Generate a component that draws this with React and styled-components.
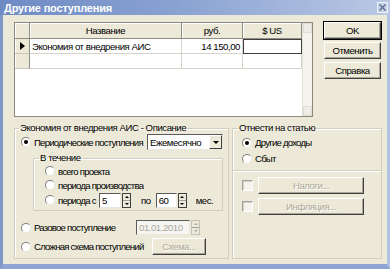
import React from 'react';
import styled, { createGlobalStyle } from 'styled-components';

const GlobalStyle = createGlobalStyle`
  body {
    margin: 0;
    background: #ece9d8;
  }
  * {
    box-sizing: border-box;
  }
`;

const Window = styled.div`
  width: 390px;
  height: 269px;
  display: flex;
  flex-direction: column;
  background: #ece9d8;
  font-family: "Liberation Sans", Arial, sans-serif;
  font-size: 9.6px;
  letter-spacing: -0.45px;
  color: #000;
  overflow: hidden;
`;

const TitleBar = styled.div`
  height: 15px;
  flex-shrink: 0;
  display: flex;
  align-items: center;
  justify-content: space-between;
  padding: 0 2px 0 4px;
  background: linear-gradient(to right, #6f8bc4 0%, #8aa2d2 45%, #b9c8e4 100%);
  color: #fff;
  font-weight: bold;
  font-size: 11px;
  letter-spacing: -0.2px;
`;

const CloseButton = styled.div`
  width: 11px;
  height: 11px;
  border: 1px solid #eef1f8;
  background: #c6d2ea;
  display: flex;
  align-items: center;
  justify-content: center;
`;

const Body = styled.div`
  flex: 1;
  display: flex;
  flex-direction: column;
  border-left: 3px solid #7f98ca;
  border-right: 3px solid #b2c2e2;
  border-bottom: 5px solid #8ea4d2;
  padding: 7px 3px 0 11px;
`;

const TopRow = styled.div`
  display: flex;
  height: 95px;
`;

const GridBox = styled.div`
  width: 299px;
  height: 95px;
  display: flex;
  background: #fff;
  border: 1px solid #8b8a80;
`;

const GridMain = styled.div`
  flex: 1;
  display: flex;
  flex-direction: column;
`;

const GridRow = styled.div`
  display: grid;
  grid-template-columns: 15px 152px 61px 59px;
  height: ${p => (p.$header ? 16 : 15)}px;
`;

const HeadCell = styled.div`
  background: #ece9d8;
  border-right: 1px solid #8e8d84;
  border-bottom: 1px solid #8e8d84;
  box-shadow: inset 1px 1px 0 #fff;
  display: flex;
  align-items: center;
  justify-content: center;
`;

const RowHead = styled.div`
  background: #ece9d8;
  border-right: 1px solid #8e8d84;
  border-bottom: 1px solid #c9c7bb;
  box-shadow: inset 1px 0 0 #fff;
  display: flex;
  align-items: center;
  justify-content: center;
`;

const Cell = styled.div`
  border-right: 1px solid #d6d4ca;
  border-bottom: 1px solid #d6d4ca;
  display: flex;
  align-items: center;
  justify-content: ${p => (p.$right ? 'flex-end' : 'flex-start')};
  padding: 0 2px;
  white-space: nowrap;
  ${p => p.$focus && 'border: 1px solid #404040;'}
`;

const ScrollBar = styled.div`
  width: 10px;
  display: flex;
  flex-direction: column;
  justify-content: space-between;
  background: #f4f3ee;
  border-left: 1px solid #e4e2d8;
`;

const ScrollArrow = styled.div`
  height: 10px;
  background: #eeede5;
  border: 1px solid #e0ded3;
`;

const ButtonColumn = styled.div`
  margin-left: 11px;
  width: 57px;
  display: flex;
  flex-direction: column;
  gap: 3px;
`;

const Button = styled.div`
  height: ${p => p.$h || 17}px;
  width: ${p => (p.$w ? `${p.$w}px` : 'auto')};
  flex-shrink: 0;
  display: flex;
  align-items: center;
  justify-content: center;
  background: #ece9d8;
  border: 1px solid;
  border-color: #fff #404040 #404040 #fff;
  box-shadow: inset -1px -1px 0 #aca899;
  color: ${p => (p.$disabled ? '#aca899' : '#000')};
  text-shadow: ${p => (p.$disabled ? '1px 1px 0 #fff' : 'none')};
  ${p => p.$default && 'outline: 1px solid #000;'}
`;

const BottomRow = styled.div`
  display: flex;
  gap: 3px;
  margin-top: 5px;
  height: 137px;
`;

const Group = styled.fieldset`
  margin: 0;
  width: ${p => p.$w}px;
  height: 100%;
  border: 1px solid #d0cebf;
  box-shadow: 1px 1px 0 #fff inset;
  padding: 0 0 0 ${p => p.$pl || 5}px;
  display: flex;
  flex-direction: column;
`;

const Legend = styled.legend`
  padding: 0 1px;
  margin-left: ${p => p.$ml || 0}px;
  line-height: 12px;
`;

const Row = styled.div`
  display: flex;
  align-items: center;
  flex-shrink: 0;
  height: ${p => p.$h || 15}px;
  margin-top: ${p => p.$mt || 0}px;
  gap: ${p => p.$gap || 0}px;
`;

const RadioLabel = styled.label`
  display: flex;
  align-items: center;
  gap: 3px;
  width: ${p => (p.$w ? `${p.$w}px` : 'auto')};
  flex-shrink: 0;
  white-space: nowrap;
  letter-spacing: -0.78px;
`;

const RadioCircle = styled.span`
  width: 10px;
  height: 10px;
  border-radius: 50%;
  background: #fff;
  border: 1px solid;
  border-color: #808080 #e8e8e0 #e8e8e0 #808080;
  display: flex;
  align-items: center;
  justify-content: center;
  flex-shrink: 0;
  &::after {
    content: '';
    width: 4px;
    height: 4px;
    border-radius: 50%;
    background: ${p => (p.$checked ? '#000' : 'transparent')};
  }
`;

const CheckBox = styled.span`
  width: 11px;
  height: 11px;
  background: #f4f3ee;
  border: 1px solid;
  border-color: #a0a0a0 #fff #fff #a0a0a0;
  box-shadow: inset 1px 1px 0 #d4d0c8;
  flex-shrink: 0;
`;

const InnerGroup = styled.fieldset`
  margin: 2px 5px 0 12px;
  height: 59px;
  flex-shrink: 0;
  border: 1px solid #d0cebf;
  box-shadow: 1px 1px 0 #fff inset;
  padding: 0 0 0 11px;
  display: flex;
  flex-direction: column;
`;

const Edit = styled.div`
  width: ${p => p.$w}px;
  height: 15px;
  background: ${p => (p.$disabled ? '#f6f5f0' : '#fff')};
  color: ${p => (p.$disabled ? '#a8a8a0' : '#000')};
  border: 1px solid;
  border-color: #5a5a5a #e8e8e0 #e8e8e0 #5a5a5a;
  display: flex;
  align-items: center;
  padding: 0 2px;
  white-space: nowrap;
`;

const SpinWrap = styled.div`
  display: flex;
  align-items: center;
  gap: 1px;
`;

const Spin = styled.div`
  width: 9px;
  height: 15px;
  display: flex;
  flex-direction: column;
  border: 1px solid ${p => (p.$disabled ? '#c4c2b8' : '#404040')};
  background: #ece9d8;
`;

const SpinHalf = styled.div`
  flex: 1;
  display: flex;
  align-items: center;
  justify-content: center;
  border-bottom: ${p => (p.$top ? '1px solid #a0a0a0' : 'none')};
  &::after {
    content: '';
    border-left: 2px solid transparent;
    border-right: 2px solid transparent;
    ${p => (p.$top ? 'border-bottom' : 'border-top')}: 2px solid ${p => (p.$disabled ? '#b0aea4' : '#000')};
  }
`;

const Select = styled.div`
  width: 76px;
  height: 16px;
  margin-left: 8px;
  display: flex;
  background: #fff;
  border: 1px solid;
  border-color: #5a5a5a #e8e8e0 #e8e8e0 #5a5a5a;
`;

const SelectText = styled.div`
  flex: 1;
  display: flex;
  align-items: center;
  padding-left: 2px;
`;

const SelectArrow = styled.div`
  width: 13px;
  background: #ece9d8;
  border: 1px solid;
  border-color: #fff #404040 #404040 #fff;
  display: flex;
  align-items: center;
  justify-content: center;
  &::after {
    content: '';
    border-left: 3px solid transparent;
    border-right: 3px solid transparent;
    border-top: 3px solid #000;
  }
`;

const Separator = styled.div`
  height: 2px;
  flex-shrink: 0;
  margin: 4px 0 0 -9px;
  border-top: 1px solid #d0cebf;
  border-bottom: 1px solid #fff;
`;

const Text = styled.span`
  margin-left: ${p => p.$ml || 0}px;
  white-space: nowrap;
`;

const Radio = ({ checked, children, w }) => (
  <RadioLabel $w={w}>
    <RadioCircle $checked={checked} />
    {children}
  </RadioLabel>
);

const SpinEdit = ({ value, w, disabled }) => (
  <SpinWrap>
    <Edit $w={w} $disabled={disabled}>{value}</Edit>
    <Spin $disabled={disabled}>
      <SpinHalf $top $disabled={disabled} />
      <SpinHalf $disabled={disabled} />
    </Spin>
  </SpinWrap>
);

const App = () => {
  return (
    <Window>
      <GlobalStyle />
      <TitleBar>
        <span>Другие поступления</span>
        <CloseButton>
          <svg width="7" height="7" viewBox="0 0 7 7">
            <path d="M0.5 0.5 L6.5 6.5 M6.5 0.5 L0.5 6.5" stroke="#5f6f8f" strokeWidth="1.4" />
          </svg>
        </CloseButton>
      </TitleBar>
      <Body>
        <TopRow>
          <GridBox>
            <GridMain>
              <GridRow $header>
                <HeadCell />
                <HeadCell>Название</HeadCell>
                <HeadCell>руб.</HeadCell>
                <HeadCell>$ US</HeadCell>
              </GridRow>
              <GridRow>
                <RowHead>
                  <svg width="5" height="8" viewBox="0 0 5 8">
                    <path d="M0 0 L5 4 L0 8 Z" fill="#000" />
                  </svg>
                </RowHead>
                <Cell>Экономия от внедрения АИС</Cell>
                <Cell $right>14 150,00</Cell>
                <Cell $focus />
              </GridRow>
              <GridRow>
                <RowHead />
                <Cell />
                <Cell />
                <Cell />
              </GridRow>
            </GridMain>
            <ScrollBar>
              <ScrollArrow />
              <ScrollArrow />
            </ScrollBar>
          </GridBox>
          <ButtonColumn>
            <Button $default $h={17}>OK</Button>
            <Button $h={17}>Отменить</Button>
            <Button $h={17}>Справка</Button>
          </ButtonColumn>
        </TopRow>

        <BottomRow>
          <Group $w={215} $pl={6}>
            <Legend $ml={-2}>Экономия от внедрения АИС - Описание</Legend>
            <Row $h={16}>
              <Radio checked w={118}>Периодические поступления</Radio>
              <Select>
                <SelectText>Ежемесячно</SelectText>
                <SelectArrow />
              </Select>
            </Row>
            <InnerGroup>
              <Legend $ml={-6}>В течение</Legend>
              <Row $h={14}>
                <Radio>всего проекта</Radio>
              </Row>
              <Row $h={14}>
                <Radio>периода производства</Radio>
              </Row>
              <Row $h={16}>
                <Radio w={54}>периода с</Radio>
                <SpinEdit value="5" w={22} />
                <Text $ml={10}>по</Text>
                <Text $ml={5} />
                <SpinEdit value="60" w={21} />
                <Text $ml={9}>мес.</Text>
              </Row>
            </InnerGroup>
            <Row $h={17} $mt={8}>
              <Radio w={115}>Разовое поступление</Radio>
              <SpinEdit value="01.01.2010" w={54} disabled />
            </Row>
            <Row $h={17} $mt={2}>
              <Radio w={131}>Сложная схема поступлений</Radio>
              <Button $w={54} $h={17} $disabled>Схема...</Button>
            </Row>
          </Group>

          <Group $w={150} $pl={9}>
            <Legend $ml={-4}>Отнести на статью</Legend>
            <Row $h={15} $mt={1}>
              <Radio checked>Другие доходы</Radio>
            </Row>
            <Row $h={15} $mt={1}>
              <Radio>Сбыт</Radio>
            </Row>
            <Separator />
            <Row $h={17} $mt={5} $gap={5}>
              <CheckBox />
              <Button $w={106} $h={17} $disabled>Налоги...</Button>
            </Row>
            <Row $h={17} $mt={4} $gap={5}>
              <CheckBox />
              <Button $w={106} $h={17} $disabled>Инфляция...</Button>
            </Row>
          </Group>
        </BottomRow>
      </Body>
    </Window>
  );
};

export default App;
